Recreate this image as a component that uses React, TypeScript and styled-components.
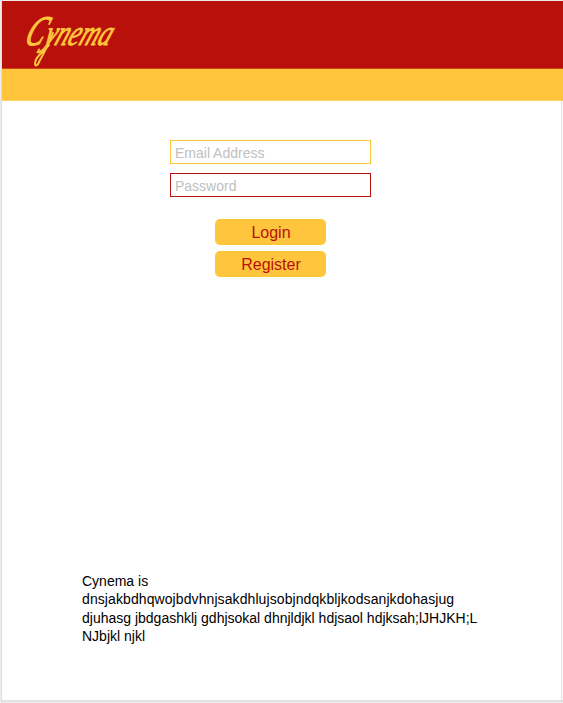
import React from "react";
import styled, { createGlobalStyle } from "styled-components";

const GlobalStyle = createGlobalStyle`
  * { box-sizing: border-box; }
  body {
    margin: 0;
    background: #f0f0f0;
    font-family: "Liberation Sans", Arial, sans-serif;
    overflow: hidden;
  }
`;

const Page = styled.div`
  display: flex;
  flex-direction: column;
  height: 703px;
  padding: 1px 0 1px 1px;
  background: #ececec;
`;

const Frame = styled.div`
  flex: 1;
  display: flex;
  flex-direction: column;
  border-left: 1px solid #dedede;
  border-bottom: 2px solid #e2e2e2;
  background: #ffffff;
`;

const Header = styled.header`
  height: 68px;
  padding: 4px 0 0 18px;
  background: #b8110b;
  border-bottom: 1px solid #d2451b;
`;

const Logo = styled.svg`
  display: block;
  overflow: visible;
  fill: #ffc63d;
  stroke: #ffc63d;
  font-family: "Liberation Serif", serif;
  font-style: italic;
`;

const NavBar = styled.nav`
  height: 32px;
  background: #ffc63d;
  border-bottom: 1px solid #fcd064;
`;

const Content = styled.main`
  flex: 1;
  display: flex;
  flex-direction: column;
  justify-content: space-between;
  margin-right: 1px;
  padding: 39px 0 54.4px;
  border-right: 1px solid #e2e2e2;
`;

const Form = styled.form`
  display: flex;
  flex-direction: column;
  align-items: flex-start;
  padding-left: 168px;
`;

const Field = styled.input<{ $accent: string }>`
  width: 201px;
  height: 24px;
  margin-bottom: 9px;
  padding: 2px 4px 0;
  border: 1px solid ${({ $accent }) => $accent};
  border-radius: 0;
  outline: none;
  background: #ffffff;
  font: 14px "Liberation Sans", Arial, sans-serif;
  &::placeholder { color: #c0c0c0; opacity: 1; }
`;

const Actions = styled.div`
  display: flex;
  flex-direction: column;
  gap: 6px;
  margin: 13px 0 0 45px;
`;

const Button = styled.button`
  width: 111px;
  height: 26px;
  padding: 2px 0 0 1px;
  border: 0;
  border-radius: 5px;
  background: #ffc63d;
  color: #b8110b;
  font: 16px "Liberation Sans", Arial, sans-serif;
`;

const About = styled.p`
  width: 400px;
  margin: 0 0 0 80px;
  color: #000000;
  font-size: 14px;
  line-height: 18.4px;
`;

const LongWord = styled.span`
  letter-spacing: 0.09px;
`;

export default function App() {
  return (
    <>
      <GlobalStyle />
      <Page>
        <Frame>
          <Header>
            <Logo width="110" height="62" viewBox="0 0 110 62" aria-label="Cynema">
              <text transform="translate(3 40) skewX(-22) scale(0.66 1)" fontSize="42" strokeWidth="1.2">
                C
              </text>
              <text transform="translate(22 40) skewX(-22) scale(0.71 1)" fontSize="36" strokeWidth="0.9">
                ynema
              </text>
              {/* long looping tail below the y */}
              <path
                d="M29 40 C24 47 17 50 15.5 56 C14 62 17 62 19.5 56 C24 48 29 39 33 28"
                fill="none"
                strokeWidth="2"
                strokeLinecap="round"
              />
            </Logo>
          </Header>
          <NavBar />
          <Content>
            <Form>
              <Field $accent="#ffc63d" type="email" placeholder="Email Address" />
              <Field $accent="#b8110b" type="password" placeholder="Password" />
              <Actions>
                <Button type="button">Login</Button>
                <Button type="button">Register</Button>
              </Actions>
            </Form>
            <About>
              Cynema is <LongWord>dnsjakbdhqwojbdvhnjsakdhlujsobjndqkbljkodsanjkdohasjug</LongWord>{" "}
              djuhasg jbdgashklj gdhjsokal dhnjldjkl hdjsaol hdjksah;lJHJKH;L NJbjkl njkl
            </About>
          </Content>
        </Frame>
      </Page>
    </>
  );
}
